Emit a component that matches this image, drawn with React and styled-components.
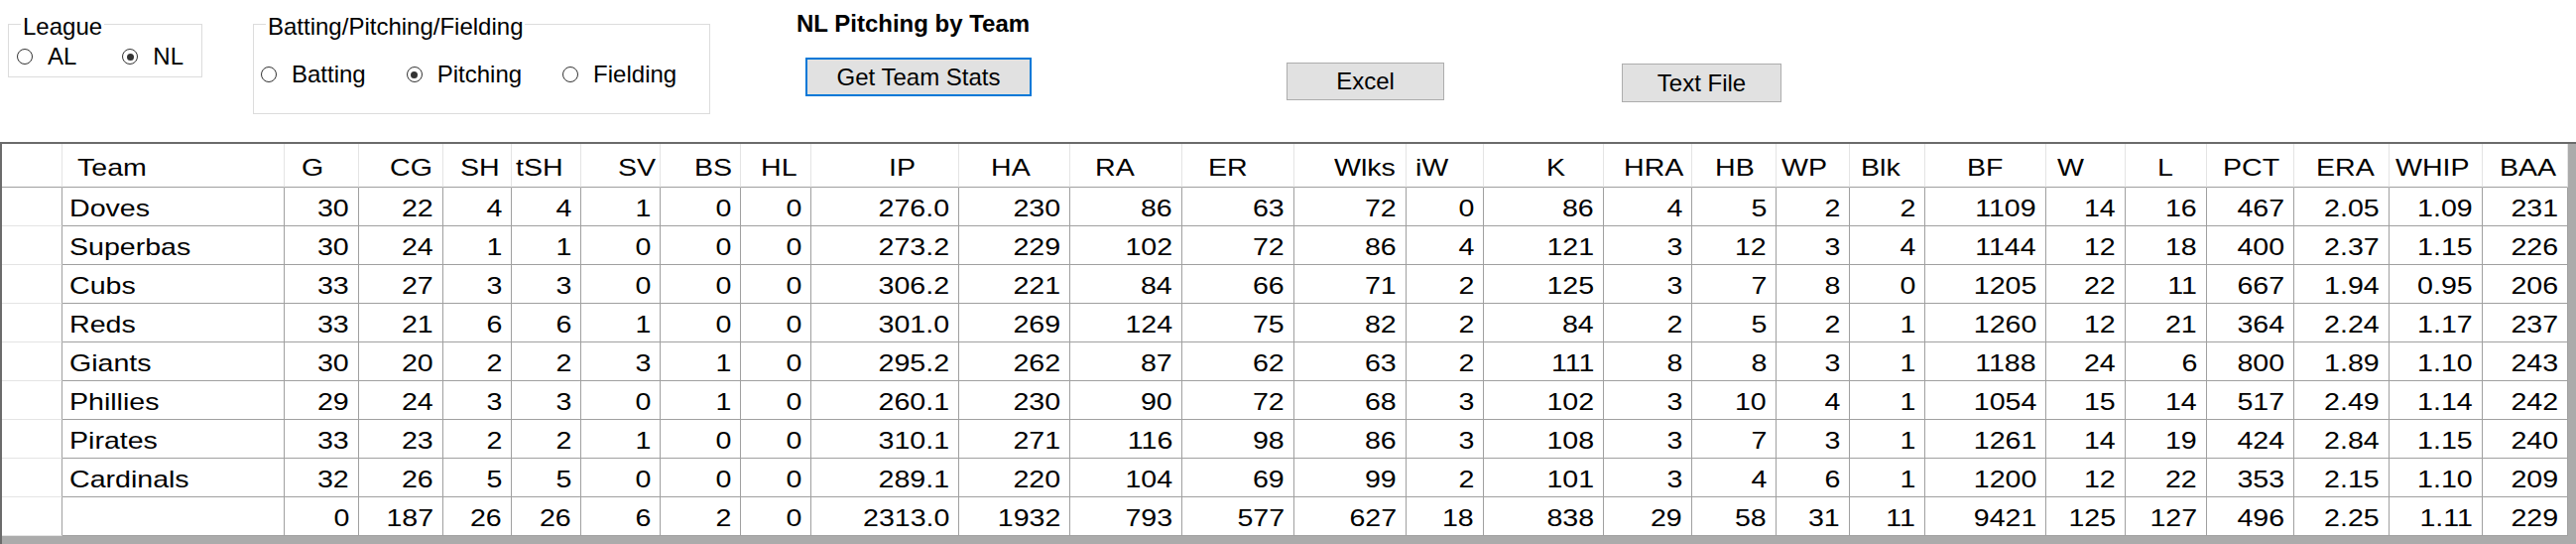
import React from 'react'
import styled, { createGlobalStyle } from 'styled-components'

const GlobalStyle = createGlobalStyle`
  html, body { margin: 0; padding: 0; background: #fff; }
  body { font-family: "Liberation Sans", Arial, sans-serif; color: #000; overflow: hidden; }
  * { box-sizing: border-box; }
`

const Window = styled.div`
  width: 2597px;
  height: 548px;
  display: flex;
  flex-direction: column;
  background: #fff;
`

const TopBar = styled.div`
  height: 143px;
  flex: none;
  display: flex;
  align-items: flex-start;
  padding-left: 8px;
  font-size: 24px;
  line-height: 28px;
`

const GroupBox = styled.div`
  position: relative;
  flex: none;
  margin-top: 24px;
  margin-left: ${p => p.$left || 0}px;
  width: ${p => p.$width}px;
  height: ${p => p.$height}px;
  border: 1px solid #dcdcdc;
  padding: ${p => p.$padTop}px 0 0 ${p => p.$padLeft}px;
`

const Caption = styled.span`
  position: absolute;
  top: -12px;
  left: 12px;
  padding: 0 2px;
  background: #fff;
  white-space: nowrap;
`

const RadioRow = styled.div`
  display: flex;
  align-items: center;
  gap: ${p => p.$gap}px;
`

const RadioItem = styled.label`
  display: inline-flex;
  align-items: center;
  gap: 15px;
  white-space: nowrap;
`

const RadioDot = styled.span`
  width: 16px;
  height: 16px;
  border: 1px solid #333;
  border-radius: 50%;
  background: #fff;
  display: inline-flex;
  align-items: center;
  justify-content: center;
  &::after {
    content: '';
    width: 7px;
    height: 7px;
    border-radius: 50%;
    background: ${p => (p.$checked ? '#333' : 'transparent')};
  }
`

const TitleBlock = styled.div`
  flex: none;
  width: 245px;
  margin-left: 87px;
  margin-top: 10px;
  display: flex;
  flex-direction: column;
  align-items: flex-start;
`

const Title = styled.div`
  font-weight: bold;
  white-space: nowrap;
`

const Button = styled.button`
  flex: none;
  font-family: inherit;
  font-size: 24px;
  line-height: 28px;
  color: #000;
  background: #e1e1e1;
  border: ${p => (p.$focused ? '2px solid #0078d7' : '1px solid #adadad')};
  width: ${p => p.$width}px;
  height: ${p => p.$height}px;
  margin: ${p => p.$top}px 0 0 ${p => p.$left}px;
  padding: 0;
`

const GridFrame = styled.div`
  flex: 1;
  background: #ababab;
  border-top: 2px solid #6b6b6b;
  border-left: 2px solid #6b6b6b;
  overflow: hidden;
`

const GridRow = styled.div`
  display: grid;
  grid-template-columns: ${p => p.$cols};
  width: max-content;
  background: #fff;
  font-size: 24px;
  line-height: 28px;
`

const HeadCell = styled.div`
  height: 44px;
  border-bottom: 1px solid #a0a0a0;
  border-right: 1px solid #e4e4e4;
  display: flex;
  align-items: center;
  padding: 5px 0 0 ${p => p.$indent}px;
  white-space: nowrap;
`

const Cell = styled.div`
  height: 39px;
  border-bottom: 1px solid #a0a0a0;
  border-right: 1px solid #a0a0a0;
  display: flex;
  align-items: center;
  justify-content: ${p => (p.$left ? 'flex-start' : 'flex-end')};
  padding: 4px ${p => (p.$left ? 0 : 9)}px 0 ${p => (p.$left ? 7 : 0)}px;
  white-space: nowrap;
`

const RowHeadCell = styled(Cell)`
  border-bottom-color: #e4e4e4;
`

const Stretch = styled.span`
  display: inline-block;
  transform: scaleX(1.19);
  transform-origin: ${p => p.$origin} center;
`

// name, width, header indent
const columns = [
  ['Team', 224, 15], ['G', 75, 17], ['CG', 85, 31], ['SH', 69, 17], ['tSH', 70, 4],
  ['SV', 80, 37], ['BS', 81, 34], ['HL', 71, 20], ['IP', 149, 78], ['HA', 112, 32],
  ['RA', 113, 25], ['ER', 113, 26], ['Wlks', 113, 40], ['iW', 78, 9], ['K', 121, 63],
  ['HRA', 89, 20], ['HB', 85, 23], ['WP', 74, 5], ['Blk', 76, 11], ['BF', 122, 42],
  ['W', 80, 11], ['L', 82, 32], ['PCT', 88, 16], ['ERA', 96, 22], ['WHIP', 94, 6],
  ['BAA', 86, 17],
]

const gridCols = ['61px', ...columns.map(c => c[1] + 'px')].join(' ')

const rows = [
  'Doves 30 22 4 4 1 0 0 276.0 230 86 63 72 0 86 4 5 2 2 1109 14 16 467 2.05 1.09 231',
  'Superbas 30 24 1 1 0 0 0 273.2 229 102 72 86 4 121 3 12 3 4 1144 12 18 400 2.37 1.15 226',
  'Cubs 33 27 3 3 0 0 0 306.2 221 84 66 71 2 125 3 7 8 0 1205 22 11 667 1.94 0.95 206',
  'Reds 33 21 6 6 1 0 0 301.0 269 124 75 82 2 84 2 5 2 1 1260 12 21 364 2.24 1.17 237',
  'Giants 30 20 2 2 3 1 0 295.2 262 87 62 63 2 111 8 8 3 1 1188 24 6 800 1.89 1.10 243',
  'Phillies 29 24 3 3 0 1 0 260.1 230 90 72 68 3 102 3 10 4 1 1054 15 14 517 2.49 1.14 242',
  'Pirates 33 23 2 2 1 0 0 310.1 271 116 98 86 3 108 3 7 3 1 1261 14 19 424 2.84 1.15 240',
  'Cardinals 32 26 5 5 0 0 0 289.1 220 104 69 99 2 101 3 4 6 1 1200 12 22 353 2.15 1.10 209',
  '- 0 187 26 26 6 2 0 2313.0 1932 793 577 627 18 838 29 58 31 11 9421 125 127 496 2.25 1.11 229',
].map(r => r.split(' ').map(v => (v === '-' ? '' : v)))

function Radio({ label, checked }) {
  return (
    <RadioItem>
      <RadioDot $checked={checked} />
      {label}
    </RadioItem>
  )
}

export default function App() {
  return (
    <Window>
      <GlobalStyle />
      <TopBar>
        <GroupBox $width={196} $height={54} $padTop={18} $padLeft={8}>
          <Caption>League</Caption>
          <RadioRow $gap={46}>
            <Radio label="AL" />
            <Radio label="NL" checked />
          </RadioRow>
        </GroupBox>
        <GroupBox $left={51} $width={461} $height={91} $padTop={36} $padLeft={7}>
          <Caption>Batting/Pitching/Fielding</Caption>
          <RadioRow $gap={41}>
            <Radio label="Batting" />
            <Radio label="Pitching" checked />
            <Radio label="Fielding" />
          </RadioRow>
        </GroupBox>
        <TitleBlock>
          <Title>NL Pitching by Team</Title>
          <Button $focused $width={228} $height={39} $top={20} $left={9}>
            Get Team Stats
          </Button>
        </TitleBlock>
        <Button $width={159} $height={38} $top={63} $left={249}>
          Excel
        </Button>
        <Button $width={161} $height={39} $top={64} $left={179}>
          Text File
        </Button>
      </TopBar>

      <GridFrame>
        <GridRow $cols={gridCols}>
          <HeadCell $indent={0} />
          {columns.map(([name, , indent]) => (
            <HeadCell key={name} $indent={indent}>
              <Stretch $origin="left">{name}</Stretch>
            </HeadCell>
          ))}
        </GridRow>
        {rows.map((r, i) => (
          <GridRow key={i} $cols={gridCols}>
            <RowHeadCell />
            {r.map((v, j) => (
              <Cell key={j} $left={j === 0}>
                <Stretch $origin={j === 0 ? 'left' : 'right'}>{v}</Stretch>
              </Cell>
            ))}
          </GridRow>
        ))}
      </GridFrame>
    </Window>
  )
}
